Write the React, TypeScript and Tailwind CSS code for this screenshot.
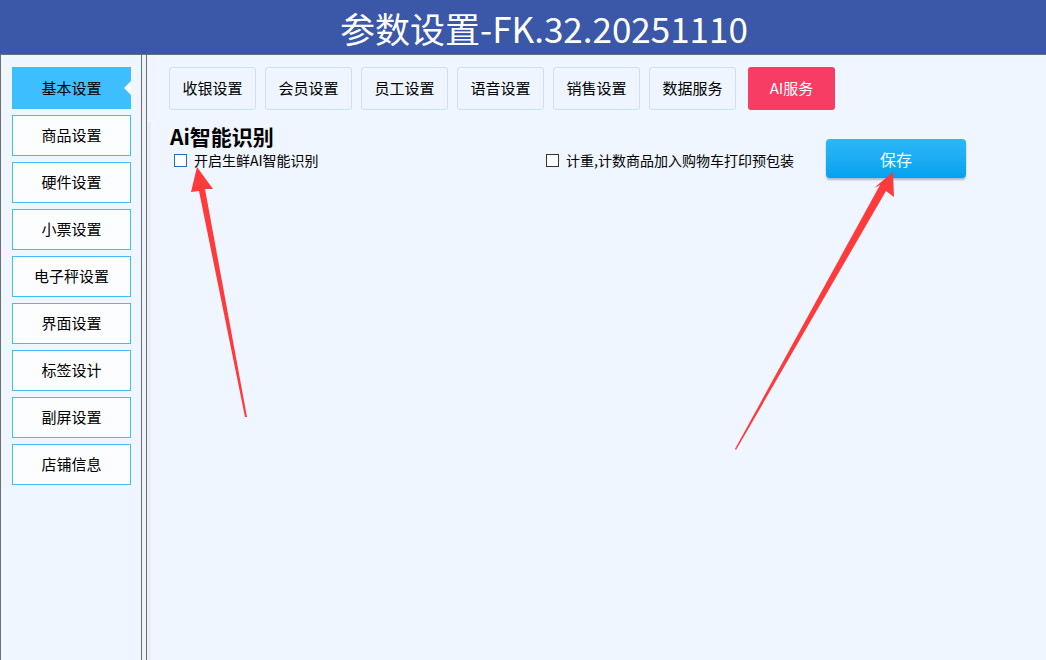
import React from "react";

const SIDE = ["基本设置", "商品设置", "硬件设置", "小票设置", "电子秤设置", "界面设置", "标签设计", "副屏设置", "店铺信息"];
const TABS = ["收银设置", "会员设置", "员工设置", "语音设置", "销售设置", "数据服务"];

const FONT = "font-['Microsoft_YaHei','Noto_Sans_CJK_SC',sans-serif]";

export default function App() {
  return (
    <div className={`relative flex h-[660px] w-[1046px] flex-col overflow-hidden bg-[#eff6ff] text-black ${FONT}`}>
      {/* 标题栏 */}
      <div className="flex h-[54px] shrink-0 items-center justify-center bg-[#3a57a8] pl-[42px] text-[35px] leading-none text-white">
        参数设置-FK.32.20251110
      </div>

      <div className="flex flex-1 border-t border-[#6b6f76]">
        {/* 左侧菜单 */}
        <div className="flex w-[142px] shrink-0 flex-col gap-[6px] border-l border-r border-[#6b6f76] bg-[#eff6ff] pl-[11px] pt-[12px]">
          {SIDE.map((s, i) =>
            i === 0 ? (
              <div key={s} className="relative flex h-[42px] w-[119px] items-center justify-center bg-[#3dbfff] text-[15px]">
                {s}
                <span className="absolute right-0 top-1/2 h-0 w-0 -translate-y-1/2 border-y-[7px] border-r-[7px] border-y-transparent border-r-white" />
              </div>
            ) : (
              <div key={s} className="flex h-[41px] w-[119px] items-center justify-center border border-[#3dbfff] bg-[#fcfdff] text-[15px]">
                {s}
              </div>
            )
          )}
        </div>

        <div className="w-[4px] shrink-0 bg-[#eef3f9]" />

        {/* 内容区 */}
        <div className="flex flex-1 border-l border-[#6b6f76]">
          <div className="mt-[67px] w-[4px] shrink-0 bg-[#eceff3]" />
          <div className="flex-1 pl-[18px] pt-[12px]">
            <div className="flex gap-[9px]">
              {TABS.map((t) => (
                <div key={t} className="flex h-[43px] w-[87px] items-center justify-center rounded-[3px] border border-[#cfe0f5] bg-[#eef5ff] text-[15px]">
                  {t}
                </div>
              ))}
              <div className="ml-[3px] flex h-[43px] w-[87px] items-center justify-center rounded-[3px] bg-[#f73d64] text-[15px] text-white">
                AI服务
              </div>
            </div>

            <div className="flex">
              <div className="w-[377px]">
                <div className="mt-[13px] pl-[1px] text-[21px] font-bold leading-[26px]">Ai智能识别</div>
                <div className="mt-[1px] flex items-center pl-[5px] text-[14px]">
                  <span className="mr-[7px] h-[13px] w-[13px] border border-[#1a73c9] bg-white" />
                  开启生鲜AI智能识别
                </div>
              </div>
              <div className="mt-[41px] flex h-[18px] w-[280px] items-center text-[14px]">
                <span className="mr-[7px] h-[13px] w-[13px] border border-[#333] bg-white" />
                计重,计数商品加入购物车打印预包装
              </div>
              <button className="mt-[29px] flex h-[39px] w-[140px] items-center justify-center rounded-[4px] bg-gradient-to-b from-[#2bb7f7] to-[#02a2ef] text-[16px] text-white shadow-[0_2px_2px_rgba(0,0,0,0.25)]">
                保存
              </button>
            </div>
          </div>
        </div>
      </div>

      {/* 红色箭头标注 */}
      <svg className="pointer-events-none absolute left-0 top-0" width="1046" height="660">
        <polygon fill="#ff3a3a" points="197,167 213,189 205,189 247,417 245,417 199,191 191,192" />
        <polygon fill="#ff3a3a" points="893,172 894,197 886,191 736,450 735,449 880,185 874,188" />
      </svg>
    </div>
  );
}
